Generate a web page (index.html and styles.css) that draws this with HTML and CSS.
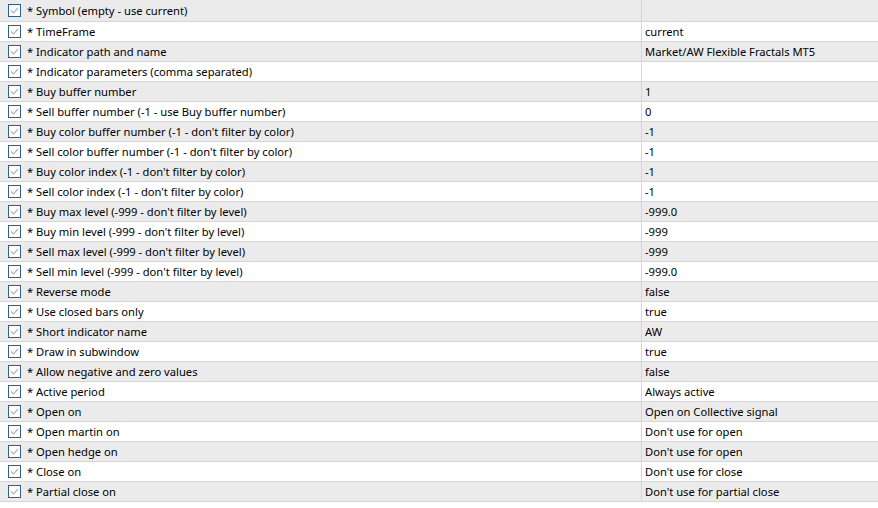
FILE: index.html
```html
<!DOCTYPE html>
<html>
<head>
<meta charset="utf-8">
<link rel="stylesheet" href="styles.css">
</head>
<body>
<div class="grid">
  <div class="row alt"><div class="label"><span class="cb"><svg viewBox="0 0 11 11"><path d="M2 5.5 L4.5 8 L9 3" /></svg></span><span>* Symbol (empty - use current)</span></div><div class="value"></div></div>
  <div class="row"><div class="label"><span class="cb"><svg viewBox="0 0 11 11"><path d="M2 5.5 L4.5 8 L9 3" /></svg></span><span>* TimeFrame</span></div><div class="value">current</div></div>
  <div class="row alt"><div class="label"><span class="cb"><svg viewBox="0 0 11 11"><path d="M2 5.5 L4.5 8 L9 3" /></svg></span><span>* Indicator path and name</span></div><div class="value">Market/AW Flexible Fractals MT5</div></div>
  <div class="row"><div class="label"><span class="cb"><svg viewBox="0 0 11 11"><path d="M2 5.5 L4.5 8 L9 3" /></svg></span><span>* Indicator parameters (comma separated)</span></div><div class="value"></div></div>
  <div class="row alt"><div class="label"><span class="cb"><svg viewBox="0 0 11 11"><path d="M2 5.5 L4.5 8 L9 3" /></svg></span><span>* Buy buffer number</span></div><div class="value">1</div></div>
  <div class="row"><div class="label"><span class="cb"><svg viewBox="0 0 11 11"><path d="M2 5.5 L4.5 8 L9 3" /></svg></span><span>* Sell buffer number (-1 - use Buy buffer number)</span></div><div class="value">0</div></div>
  <div class="row alt"><div class="label"><span class="cb"><svg viewBox="0 0 11 11"><path d="M2 5.5 L4.5 8 L9 3" /></svg></span><span>* Buy color buffer number (-1 - don't filter by color)</span></div><div class="value">-1</div></div>
  <div class="row"><div class="label"><span class="cb"><svg viewBox="0 0 11 11"><path d="M2 5.5 L4.5 8 L9 3" /></svg></span><span>* Sell color buffer number (-1 - don't filter by color)</span></div><div class="value">-1</div></div>
  <div class="row alt"><div class="label"><span class="cb"><svg viewBox="0 0 11 11"><path d="M2 5.5 L4.5 8 L9 3" /></svg></span><span>* Buy color index (-1 - don't filter by color)</span></div><div class="value">-1</div></div>
  <div class="row"><div class="label"><span class="cb"><svg viewBox="0 0 11 11"><path d="M2 5.5 L4.5 8 L9 3" /></svg></span><span>* Sell color index (-1 - don't filter by color)</span></div><div class="value">-1</div></div>
  <div class="row alt"><div class="label"><span class="cb"><svg viewBox="0 0 11 11"><path d="M2 5.5 L4.5 8 L9 3" /></svg></span><span>* Buy max level (-999 - don't filter by level)</span></div><div class="value">-999.0</div></div>
  <div class="row"><div class="label"><span class="cb"><svg viewBox="0 0 11 11"><path d="M2 5.5 L4.5 8 L9 3" /></svg></span><span>* Buy min level (-999 - don't filter by level)</span></div><div class="value">-999</div></div>
  <div class="row alt"><div class="label"><span class="cb"><svg viewBox="0 0 11 11"><path d="M2 5.5 L4.5 8 L9 3" /></svg></span><span>* Sell max level (-999 - don't filter by level)</span></div><div class="value">-999</div></div>
  <div class="row"><div class="label"><span class="cb"><svg viewBox="0 0 11 11"><path d="M2 5.5 L4.5 8 L9 3" /></svg></span><span>* Sell min level (-999 - don't filter by level)</span></div><div class="value">-999.0</div></div>
  <div class="row alt"><div class="label"><span class="cb"><svg viewBox="0 0 11 11"><path d="M2 5.5 L4.5 8 L9 3" /></svg></span><span>* Reverse mode</span></div><div class="value">false</div></div>
  <div class="row"><div class="label"><span class="cb"><svg viewBox="0 0 11 11"><path d="M2 5.5 L4.5 8 L9 3" /></svg></span><span>* Use closed bars only</span></div><div class="value">true</div></div>
  <div class="row alt"><div class="label"><span class="cb"><svg viewBox="0 0 11 11"><path d="M2 5.5 L4.5 8 L9 3" /></svg></span><span>* Short indicator name</span></div><div class="value">AW</div></div>
  <div class="row"><div class="label"><span class="cb"><svg viewBox="0 0 11 11"><path d="M2 5.5 L4.5 8 L9 3" /></svg></span><span>* Draw in subwindow</span></div><div class="value">true</div></div>
  <div class="row alt"><div class="label"><span class="cb"><svg viewBox="0 0 11 11"><path d="M2 5.5 L4.5 8 L9 3" /></svg></span><span>* Allow negative and zero values</span></div><div class="value">false</div></div>
  <div class="row"><div class="label"><span class="cb"><svg viewBox="0 0 11 11"><path d="M2 5.5 L4.5 8 L9 3" /></svg></span><span>* Active period</span></div><div class="value">Always active</div></div>
  <div class="row alt"><div class="label"><span class="cb"><svg viewBox="0 0 11 11"><path d="M2 5.5 L4.5 8 L9 3" /></svg></span><span>* Open on</span></div><div class="value">Open on Collective signal</div></div>
  <div class="row"><div class="label"><span class="cb"><svg viewBox="0 0 11 11"><path d="M2 5.5 L4.5 8 L9 3" /></svg></span><span>* Open martin on</span></div><div class="value">Don't use for open</div></div>
  <div class="row alt"><div class="label"><span class="cb"><svg viewBox="0 0 11 11"><path d="M2 5.5 L4.5 8 L9 3" /></svg></span><span>* Open hedge on</span></div><div class="value">Don't use for open</div></div>
  <div class="row"><div class="label"><span class="cb"><svg viewBox="0 0 11 11"><path d="M2 5.5 L4.5 8 L9 3" /></svg></span><span>* Close on</span></div><div class="value">Don't use for close</div></div>
  <div class="row alt"><div class="label"><span class="cb"><svg viewBox="0 0 11 11"><path d="M2 5.5 L4.5 8 L9 3" /></svg></span><span>* Partial close on</span></div><div class="value">Don't use for partial close</div></div>
  <div class="row tail"><div class="label tail-label"><span class="folder"></span><span>Comments for "Signals"</span></div><div class="value novline"></div></div>
</div>
</body>
</html>
```
FILE: styles.css
```css
html, body {
  margin: 0;
  padding: 0;
  background: #ffffff;
  overflow: hidden;
}
body {
  width: 878px;
  height: 508px;
  font-family: "Noto Sans", "Open Sans", sans-serif;
  font-size: 11.2px;
  color: #000;
}
.grid {
  display: flex;
  flex-direction: column;
  padding-top: 2px;
}
.row {
  display: grid;
  grid-template-columns: 641px 1fr;
  height: 19px;
  border-bottom: 1px solid #d6d6d6;
  background: #ffffff;
}
.row:first-child {
  margin-top: -2px;
  height: 21px;
}
.row.alt {
  background: #ebebeb;
}
.label {
  display: flex;
  align-items: center;
  gap: 6px;
  padding-left: 8px;
  white-space: nowrap;
  overflow: hidden;
  line-height: 19px;
}
.value {
  border-left: 1px solid #d6d6d6;
  padding-left: 3px;
  line-height: 19px;
  white-space: nowrap;
  overflow: hidden;
}
.cb {
  width: 11px;
  height: 11px;
  border: 1px solid #2b5f93;
  background: #ffffff;
  flex: none;
  display: flex;
}
.cb svg {
  width: 11px;
  height: 11px;
}
.cb path {
  fill: none;
  stroke: #b4b4b4;
  stroke-width: 1.2;
}
.tail {
  border-bottom: none;
}
.tail-label {
  padding-left: 0;
  align-items: flex-start;
  padding-top: 3px;
  gap: 8px;
  font-weight: 600;
}
.folder {
  width: 5px;
  height: 10px;
  margin-top: 3px;
  background: #c8902a;
}
.novline {
  border-left: none;
}
```
